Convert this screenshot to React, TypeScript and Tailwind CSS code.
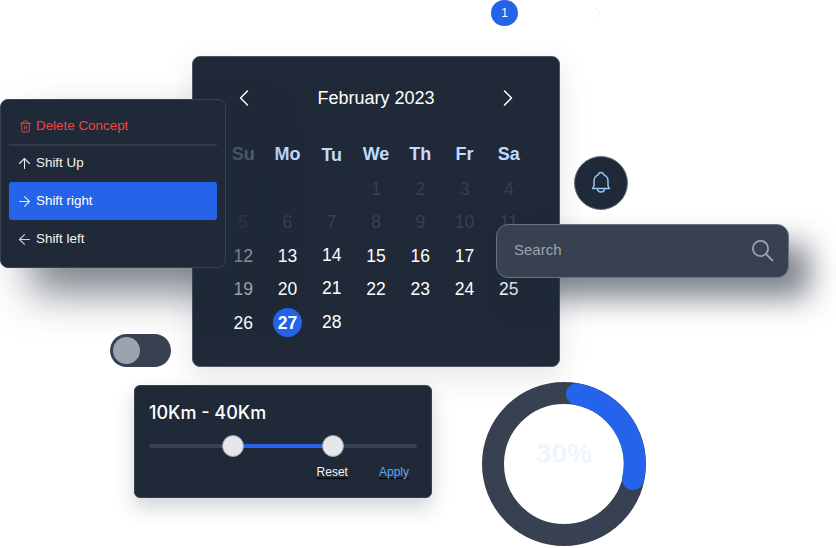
import { ArrowLeft, ArrowRight, ArrowUp, ChevronLeft, ChevronRight, Trash2 } from "lucide-react";

const days = ["Su", "Mo", "Tu", "We", "Th", "Fr", "Sa"];

const weeks: (number | null)[][] = [
  [null, null, null, 1, 2, 3, 4],
  [5, 6, 7, 8, 9, 10, 11],
  [12, 13, 14, 15, 16, 17, 18],
  [19, 20, 21, 22, 23, 24, 25],
  [26, 27, 28, null, null, null, null],
];

function Calendar() {
  return (
    <div className="absolute left-[192px] top-[56px] w-[368px] h-[311px] rounded-lg bg-[#1f2937] border border-[#4b5563] shadow-[0_10px_30px_rgba(31,41,55,0.12)] px-[6px]">
      <div className="flex items-center justify-between h-[82px] px-[31px] text-white">
        <ChevronLeft size={28} strokeWidth={1.3} />
        <span className="text-[18px]">February 2023</span>
        <ChevronRight size={28} strokeWidth={1.3} />
      </div>
      <div className="grid grid-cols-7 w-[310px] ml-[22px] h-[30px] items-center text-center text-[18px] font-semibold text-[#bfdbfe]">
        {days.map((d, i) => (
          <span key={d} className={i === 0 ? "text-[#64748b]" : i === 2 ? "translate-y-px" : ""}>
            {d}
          </span>
        ))}
      </div>
      <div className="mt-[3px] w-[310px] ml-[22px]">
        {weeks.map((week, w) => (
          <div key={w} className="grid grid-cols-7 h-[33.5px] items-center text-center text-[17.5px]">
            {week.map((n, i) => {
              if (n === 27) {
                return (
                  <span key={i} className="mx-auto flex w-[29px] h-[29px] items-center justify-center rounded-full bg-[#2563eb] font-bold text-white">
                    {n}
                  </span>
                );
              }
              let tone = "text-white";
              if (w < 2) tone = "text-[#374151]";
              else if (i === 0 && w < 4) tone = "text-[#c2c5ca]";
              else if (i === 2) tone = "text-white -translate-y-px";
              return (
                <span key={i} className={tone}>
                  {n}
                </span>
              );
            })}
          </div>
        ))}
      </div>
    </div>
  );
}

function ContextMenu() {
  return (
    <div className="absolute left-0 top-[99px] w-[226px] h-[169px] rounded-lg bg-[#1f2937] border border-[#374151] shadow-[30px_25px_42px_rgba(31,41,55,0.58)] px-[8px] text-[13.4px] text-[#f3f4f6]">
      <div className="flex items-center gap-[4px] h-[44px] pl-[10px] pt-[9px] text-[#ef4444]">
        <Trash2 size={13} strokeWidth={1.75} />
        <span>Delete Concept</span>
      </div>
      <div className="h-[2px] bg-[#2f3a4a]" />
      <div className="flex items-center gap-[3px] h-[36px] pb-[2px] pl-[7px]">
        <ArrowUp size={17} strokeWidth={1.5} className="shrink-0" />
        <span>Shift Up</span>
      </div>
      <div className="flex items-center gap-[3px] h-[38px] pl-[7px] rounded-[3px] bg-[#2563eb] text-white">
        <ArrowRight size={17} strokeWidth={1.5} className="shrink-0 text-[#dbeafe]" />
        <span>Shift right</span>
      </div>
      <div className="flex items-center gap-[3px] h-[38px] pl-[7px]">
        <ArrowLeft size={17} strokeWidth={1.5} className="shrink-0 text-[#d1d5db]" />
        <span>Shift left</span>
      </div>
    </div>
  );
}

function SearchBar() {
  return (
    <div className="absolute left-[496px] top-[224px] w-[293px] h-[54px] rounded-xl bg-[#374151] border border-[#6b7280] shadow-[21px_20px_30px_rgba(31,41,55,0.58)] flex items-center justify-between pl-[17px] pr-[13px]">
      <span className="mb-[2px] text-[15px] text-[#9ca3af]">Search</span>
      <svg width="24" height="24" viewBox="0 0 24 24" fill="none" stroke="#9ca3af" strokeWidth="1.8">
        <circle cx="9.5" cy="9.5" r="7.6" />
        <path d="M15 15l7 7" />
      </svg>
    </div>
  );
}

function BellButton() {
  return (
    <div className="absolute left-[574px] top-[156px] w-[54px] h-[54px] flex items-center justify-center rounded-full bg-[#1f2937] border border-[#6b7280]">
      <svg width="32" height="32" viewBox="0 0 32 32" fill="none" stroke="#93c5fd" strokeWidth="1.5" strokeLinejoin="round">
        <path d="M16 5.5c-1.5 0-2.5 1-2.8 2.4-2.6 1-4.2 3.4-4.2 6.3v4c0 1.5-.7 2.6-1.5 3.3h17c-.8-.7-1.5-1.8-1.5-3.3v-4c0-2.9-1.6-5.3-4.2-6.3-.3-1.4-1.3-2.4-2.8-2.4z" />
        <path d="M12.5 21.5c0 2 1.5 3.5 3.5 3.5s3.5-1.5 3.5-3.5" />
      </svg>
    </div>
  );
}

function RangeCard() {
  return (
    <div className="absolute left-[134px] top-[385px] w-[298px] h-[113px] rounded-md bg-[#1f2937] border border-[#374151] shadow-[0_10px_20px_rgba(31,41,55,0.2)] px-[14px] pt-[15px]">
      <div className="font-['Inter',sans-serif] text-[18px] font-medium leading-[24px] text-white">10Km - 40Km</div>
      <div className="relative mt-[19px] h-[4px] w-[268px] rounded-full bg-[#374151]">
        <div className="absolute left-[84px] w-[100px] h-[4px] bg-[#2563eb]" />
        <div className="absolute left-[73px] top-[-9px] w-[22px] h-[22px] rounded-full bg-[#e5e7eb] border border-[#9ca3af]" />
        <div className="absolute left-[173px] top-[-9px] w-[22px] h-[22px] rounded-full bg-[#e5e7eb] border border-[#9ca3af]" />
      </div>
      <div className="flex justify-end gap-[31px] mt-[15px] pr-[8px] text-[12px] underline underline-offset-2">
        <span className="text-[#f3f4f6]">Reset</span>
        <span className="text-[#60a5fa]">Apply</span>
      </div>
    </div>
  );
}

function Donut() {
  return (
    <div className="absolute left-[482px] top-[382px] w-[164px] h-[164px] flex items-center justify-center">
      <svg width="164" height="164" viewBox="0 0 164 164" className="absolute inset-0">
        <circle cx="82" cy="82" r="71" fill="none" stroke="#374151" strokeWidth="22" />
        <path d="M 95 12.2 A 71 71 0 0 1 151 97" fill="none" stroke="#2563eb" strokeWidth="22" strokeLinecap="round" />
      </svg>
      <span className="relative -mt-[20px] text-[28px] font-bold text-[#eff6ff]">30%</span>
    </div>
  );
}

export default function App() {
  return (
    <div className="relative w-[836px] h-[548px] overflow-hidden bg-white font-['Liberation_Sans',sans-serif]">
      <div className="absolute left-[491px] top-0 w-[27px] h-[26px] flex items-center justify-center rounded-full bg-[#2563eb] text-[12px] text-white">
        1
      </div>
      <ChevronRight size={18} strokeWidth={1.5} className="absolute left-[589px] top-[4px] text-[#f3f4f6]" />

      <Calendar />
      <ContextMenu />
      <BellButton />
      <SearchBar />

      <div className="absolute left-[110px] top-[334px] w-[61px] h-[33px] rounded-full bg-[#374151] flex items-center pl-[3px]">
        <div className="w-[27px] h-[27px] rounded-full bg-[#9ca3af]" />
      </div>

      <RangeCard />
      <Donut />
    </div>
  );
}
